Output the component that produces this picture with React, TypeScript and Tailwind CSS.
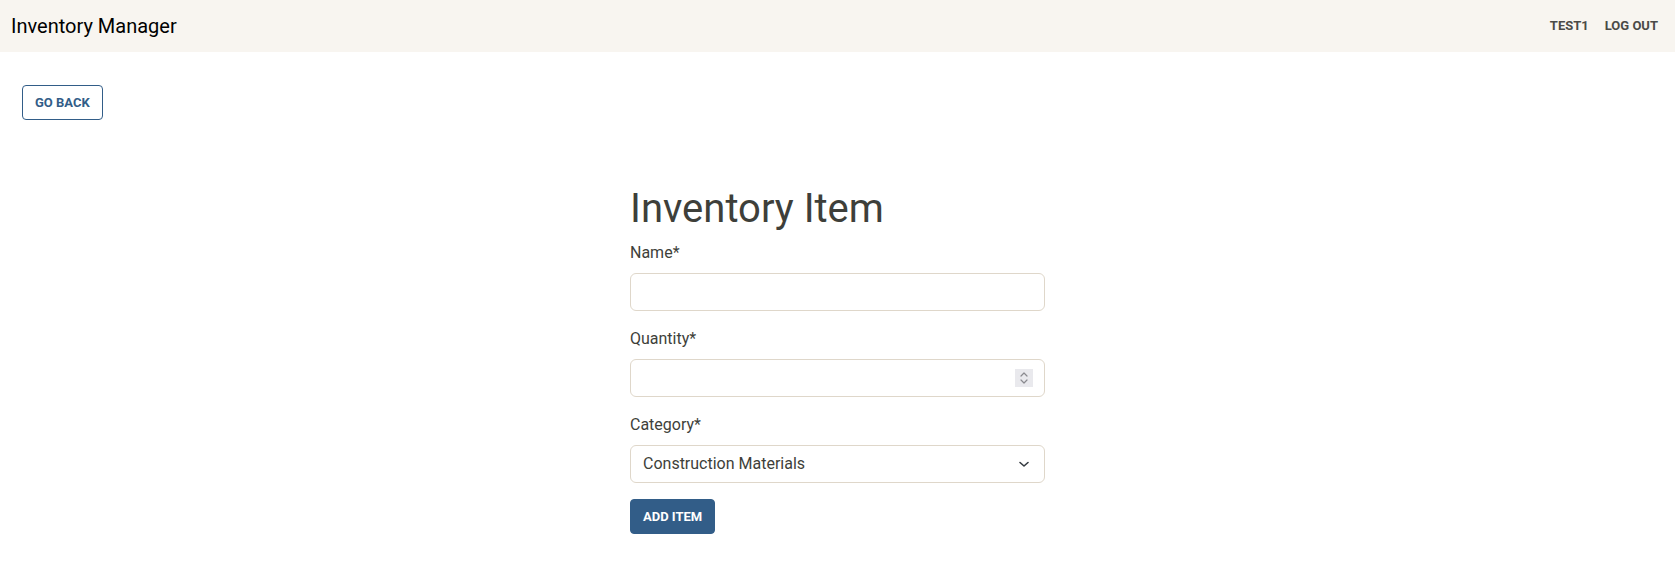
import React from "react";

export default function App() {
  return (
    <div className="min-h-[576px] bg-white text-[#3e3f3a]" style={{ fontFamily: "Roboto, 'Liberation Sans', sans-serif" }}>
      <header className="h-[52px] bg-[#f8f5f0] flex items-center justify-between pl-[11px] pr-[9px]">
        <div className="text-[20px] leading-[28px] text-black">Inventory Manager</div>
        <nav className="flex items-center text-[13px] font-bold text-[#4a4a47] uppercase">
          <span className="px-[8px] py-[8px]">TEST1</span>
          <span className="px-[8px] py-[8px]">LOG OUT</span>
        </nav>
      </header>

      <div className="pl-[22px] pt-[33px]">
        <button className="h-[35px] px-[12px] rounded-[4px] border border-[#325d88] text-[#325d88] text-[13px] font-bold uppercase leading-none bg-white">
          GO BACK
        </button>
      </div>

      <main className="w-[415px] mx-auto mt-[65px]">
        <h1 className="text-[40px] leading-[48px] font-normal mb-[8px] text-[#3e3f3a]">Inventory Item</h1>

        <div className="mb-[16px]">
          <label className="block text-[16px] leading-[24px] mb-[8px]">Name*</label>
          <div className="h-[38px] rounded-[6px] border border-[#dfd7ca] bg-white"></div>
        </div>

        <div className="mb-[16px]">
          <label className="block text-[16px] leading-[24px] mb-[8px]">Quantity*</label>
          <div className="h-[38px] rounded-[6px] border border-[#dfd7ca] bg-white flex items-center justify-end pr-[11px]">
            <div className="w-[18px] h-[18px] bg-[#e9e9ed] flex items-center justify-center">
              <svg width="10" height="14" viewBox="0 0 10 14" fill="none" stroke="#8a8a8f" strokeWidth="1.2" strokeLinecap="round" strokeLinejoin="round">
                <path d="M2 5 L5 2 L8 5" />
                <path d="M2 9 L5 12 L8 9" />
              </svg>
            </div>
          </div>
        </div>

        <div className="mb-[16px]">
          <label className="block text-[16px] leading-[24px] mb-[8px]">Category*</label>
          <div className="h-[38px] rounded-[6px] border border-[#dfd7ca] bg-white flex items-center justify-between pl-[12px] pr-[12px]">
            <span className="text-[16px] text-[#3e3f3a]">Construction Materials</span>
            <svg width="16" height="16" viewBox="0 0 16 16" fill="none" stroke="#343a40" strokeWidth="1.6" strokeLinecap="round" strokeLinejoin="round">
              <path d="M4 6.5 L8 10 L12 6.5" />
            </svg>
          </div>
        </div>

        <button className="h-[35px] px-[12px] rounded-[4px] bg-[#325d88] border border-[#325d88] text-white text-[13px] font-bold uppercase leading-none">
          ADD ITEM
        </button>
      </main>
    </div>
  );
}
